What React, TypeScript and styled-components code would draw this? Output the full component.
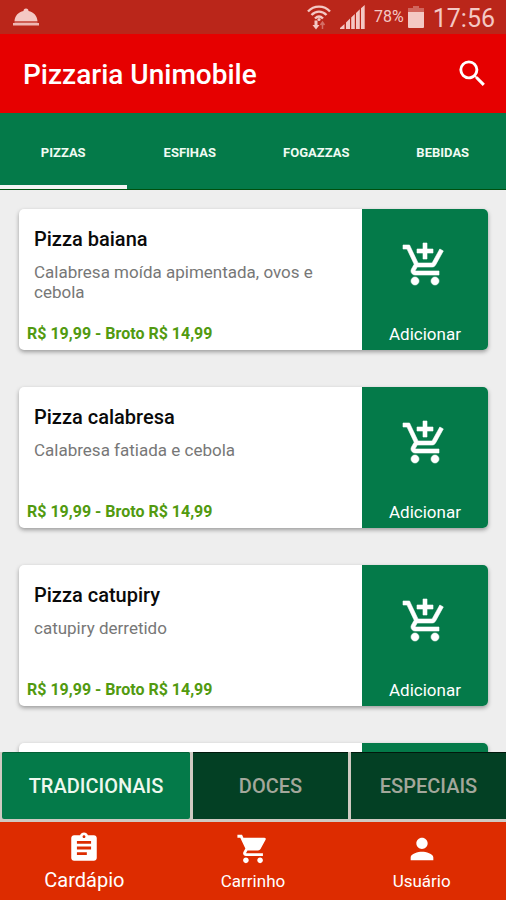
import React, { useState } from "react";
import styled, { createGlobalStyle } from "styled-components";
import {
  MdAddShoppingCart,
  MdAssignment,
  MdPerson,
  MdSearch,
  MdShoppingCart,
} from "react-icons/md";

const GlobalStyle = createGlobalStyle`
  * { box-sizing: border-box; }
  body { margin: 0; background: #eeeeee; font-family: Roboto, "Liberation Sans", sans-serif; }
  button { font: inherit; border: 0; margin: 0; padding: 0; cursor: pointer; }
  h1, h2, p, ul { margin: 0; padding: 0; }
  svg { display: block; flex: none; }
`;

const Screen = styled.div`
  display: flex;
  flex-direction: column;
  height: 100vh;
  overflow: hidden;
  background: #eeeeee;
`;

const StatusBar = styled.div`
  display: flex;
  align-items: center;
  justify-content: space-between;
  flex: none;
  height: 34px;
  padding: 0 11px 0 13px;
  background: #ba261a;
  color: #f4c8c4;
`;

const StatusIcons = styled.div`
  display: flex;
  align-items: center;
  gap: 9px;
`;

const BatteryLevel = styled.span`
  display: flex;
  align-items: center;
  gap: 4px;
  font-size: 16px;
  line-height: 20px;
`;

const Clock = styled.span`
  padding-top: 4px;
  font-size: 25px;
  line-height: 30px;
`;

const Toolbar = styled.header`
  display: flex;
  align-items: center;
  justify-content: space-between;
  flex: none;
  height: 79px;
  padding: 0 16px 0 23px;
  background: #e60000;
  color: #ffffff;
`;

const Title = styled.h1`
  padding-top: 2px;
  font-size: 28px;
  font-weight: 500;
  line-height: 36px;
`;

const IconButton = styled.button`
  display: flex;
  background: none;
  color: inherit;
`;

const Tabs = styled.nav`
  display: grid;
  grid-template-columns: repeat(4, 1fr);
  flex: none;
  height: 77px;
  background: #047a49;
  border-bottom: 1px solid #00500f;
`;

const Tab = styled.button<{ $active: boolean }>`
  padding-top: 6px;
  background: none;
  color: #f0faf3;
  font-size: 13px;
  font-weight: 700;
  border-bottom: 4px solid ${(p) => (p.$active ? "#f4f4f4" : "transparent")};
`;

const Menu = styled.ul`
  display: flex;
  flex: 1;
  flex-direction: column;
  gap: 37px;
  min-height: 0;
  padding: 19px 18px 0 19px;
  overflow: hidden;
  list-style: none;
`;

const Card = styled.li`
  display: flex;
  flex: none;
  min-height: 141px;
  overflow: hidden;
  border-radius: 5px;
  background: #ffffff;
  box-shadow: 0 2px 4px rgba(0, 0, 0, 0.35);
`;

const Details = styled.div`
  display: flex;
  flex: 1;
  flex-direction: column;
  padding: 18px 15px 6px;
`;

const Name = styled.h2`
  color: #0a0a0a;
  font-size: 20px;
  font-weight: 500;
  line-height: 24px;
`;

const Description = styled.p`
  margin-top: 11px;
  color: #777777;
  font-size: 17px;
  line-height: 20px;
`;

const Price = styled.p`
  margin: auto 0 0 -7px;
  color: #529a10;
  font-size: 16px;
  font-weight: 700;
  line-height: 20px;
`;

const AddButton = styled.button`
  display: flex;
  flex: none;
  flex-direction: column;
  align-items: center;
  justify-content: space-between;
  width: 126px;
  padding: 32px 0 6px;
  background: #047a49;
  color: #ffffff;
  font-size: 17px;
  line-height: 20px;

  path:not([fill="none"]) {
    stroke: currentColor;
    stroke-width: 0.3;
  }

  path[fill="none"] {
    stroke: none;
  }
`;

const Filters = styled.div`
  display: grid;
  grid-template-columns: 188fr 155fr 155fr;
  gap: 3px;
  flex: none;
  height: 70px;
  padding: 0 0 3px 2px;
  background: #d0cac2;
`;

const Filter = styled.button<{ $active: boolean }>`
  border-radius: ${(p) => (p.$active ? "2px" : "0")};
  background: ${(p) => (p.$active ? "#047a49" : "#034024")};
  box-shadow: inset 0 1px ${(p) => (p.$active ? "#036036" : "#01180c")};
  color: ${(p) => (p.$active ? "#eef8ee" : "#a3a79b")};
  font-size: 20px;
  font-weight: 500;
`;

const BottomNav = styled.nav`
  display: grid;
  grid-template-columns: repeat(3, 1fr);
  flex: none;
  height: 78px;
  background: #dd2c00;
`;

const NavItem = styled.button<{ $active: boolean }>`
  display: flex;
  flex-direction: column;
  align-items: center;
  justify-content: flex-end;
  gap: ${(p) => (p.$active ? "3px" : "4px")};
  padding-bottom: 8px;
  background: none;
  color: #ffffff;
  font-size: ${(p) => (p.$active ? "20px" : "17px")};
  line-height: ${(p) => (p.$active ? "24px" : "22px")};
`;

const ClocheIcon = () => (
  <svg width="26" height="19" viewBox="0 0 26 19" fill="currentColor">
    <path d="M1.500 13C2 7.500 5.500 4 10.500 3a2.500 2.500 0 1 1 5 0C20.500 4 24 7.500 24.500 13z" />
    <path d="M1.500 13h23v2h-23z" opacity=".35" />
    <path d="M0 15h26v2.500H0z" opacity=".9" />
  </svg>
);

const WifiIcon = () => (
  <svg width="24" height="25" viewBox="0 0 24 25" fill="none" stroke="currentColor" strokeWidth="2.4">
    <path d="M1 6.500C7 0 17 0 23 6.500M4.500 10C9 5.500 15 5.500 19.500 10M8 13.500C10.500 11 13.500 11 16 13.500" />
    <circle cx="12" cy="14.500" r="1.600" fill="currentColor" stroke="none" />
    <path d="M9 15.500v5" strokeWidth="3" />
    <path d="M5.500 20h7L9 24.500z" fill="currentColor" stroke="none" />
    <path d="M15.500 24v-6.500M13.500 20l2-3 2 3" strokeWidth="1.500" opacity=".45" />
  </svg>
);

const SignalIcon = () => (
  <svg width="25" height="24" viewBox="0 0 25 24" fill="currentColor">
    <path d="M0 24v-1l4.500-4V24zM6 24v-6.500l4-4V24zM11.200 24V12.500l3.600-3.600V24zM16 24V8l3.800-3.800V24zM21 24V3.300L24.700 0v24z" />
  </svg>
);

const BatteryIcon = () => (
  <svg width="16" height="22" viewBox="0 0 16 22" fill="currentColor">
    <path d="M5 0h6v2h5v4H0V2h5z" opacity=".4" />
    <path d="M0 6h16v15a1 1 0 0 1-1 1H1a1 1 0 0 1-1-1z" />
  </svg>
);

const tabs = ["PIZZAS", "ESFIHAS", "FOGAZZAS", "BEBIDAS"];
const filters = ["TRADICIONAIS", "DOCES", "ESPECIAIS"];
const pizzas = [
  { name: "Pizza baiana", description: "Calabresa moída apimentada, ovos e cebola" },
  { name: "Pizza calabresa", description: "Calabresa fatiada e cebola" },
  { name: "Pizza catupiry", description: "catupiry derretido" },
  { name: "", description: "" },
];
const sections = [
  { label: "Cardápio", Icon: MdAssignment },
  { label: "Carrinho", Icon: MdShoppingCart },
  { label: "Usuário", Icon: MdPerson },
];

export default function App() {
  const [tab, setTab] = useState(0);
  const [filter, setFilter] = useState(0);
  const [section, setSection] = useState(0);

  return (
    <Screen>
      <GlobalStyle />
      <StatusBar>
        <ClocheIcon />
        <StatusIcons>
          <WifiIcon />
          <SignalIcon />
          <BatteryLevel>
            78%
            <BatteryIcon />
          </BatteryLevel>
          <Clock>17:56</Clock>
        </StatusIcons>
      </StatusBar>
      <Toolbar>
        <Title>Pizzaria Unimobile</Title>
        <IconButton aria-label="Buscar">
          <MdSearch size={35} />
        </IconButton>
      </Toolbar>
      <Tabs>
        {tabs.map((label, i) => (
          <Tab key={label} $active={i === tab} onClick={() => setTab(i)}>
            {label}
          </Tab>
        ))}
      </Tabs>
      <Menu>
        {pizzas.map((pizza, i) => (
          <Card key={i}>
            <Details>
              {pizza.name && (
                <>
                  <Name>{pizza.name}</Name>
                  <Description>{pizza.description}</Description>
                  <Price>R$ 19,99 - Broto R$ 14,99</Price>
                </>
              )}
            </Details>
            <AddButton aria-label="Adicionar">
              <MdAddShoppingCart size={48} />
              {pizza.name && <span>Adicionar</span>}
            </AddButton>
          </Card>
        ))}
      </Menu>
      <Filters>
        {filters.map((label, i) => (
          <Filter key={label} $active={i === filter} onClick={() => setFilter(i)}>
            {label}
          </Filter>
        ))}
      </Filters>
      <BottomNav>
        {sections.map(({ label, Icon }, i) => (
          <NavItem key={label} $active={i === section} onClick={() => setSection(i)}>
            <Icon size={34} />
            {label}
          </NavItem>
        ))}
      </BottomNav>
    </Screen>
  );
}
